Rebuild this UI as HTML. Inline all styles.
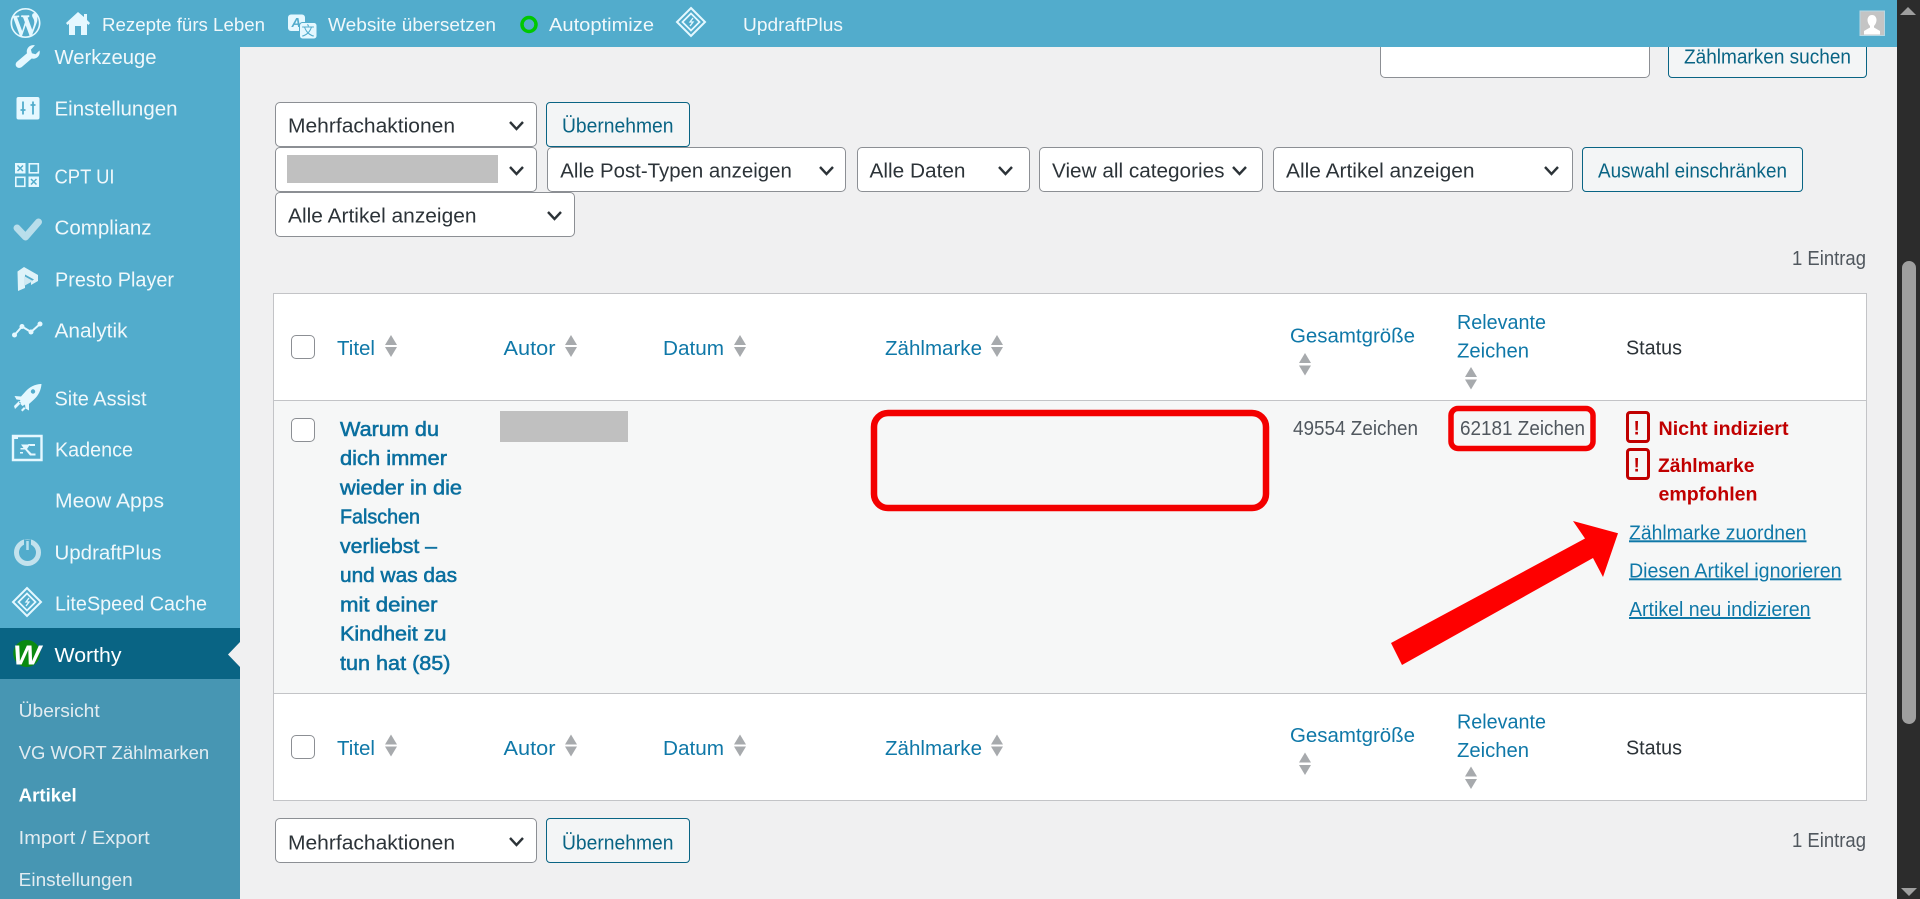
<!DOCTYPE html>
<html lang="de"><head><meta charset="utf-8"><title>Worthy – Artikel</title>
<style>
html,body{margin:0;padding:0;width:1920px;height:899px;overflow:hidden;background:#f0f0f1;font-family:"Liberation Sans",sans-serif}
.b{position:absolute;box-sizing:border-box}
.sel{background:#fff;border:1px solid #8c8f94;border-radius:5px}
.btn{background:#f3f5f6;border:1px solid #096484;border-radius:4px}
svg{position:absolute;left:0;top:0}
text{font-family:"Liberation Sans",sans-serif;font-size:20px}
.s{fill:#f0f8fb;font-size:20px}
.u{fill:#e2ecf1;font-size:18.6px}
.top{fill:#f0f8fb;font-size:18.8px}
.d{fill:#2c3338}
.g{fill:#50575e}
.bt{fill:#096484}
.l{fill:#0f78a8}
.tl{fill:#0a6f9f;stroke:#0a6f9f;stroke-width:.55px}
.r{fill:#c00000;font-weight:700;font-size:19.6px}
.a{fill:#0f78a8;text-decoration:underline}
.c{fill:none;stroke:#2c3338;stroke-width:2.4}
.ar{fill:#a7aaad}
.ic{fill:#e5f8ff}
</style></head>
<body>
<div class="b" style="left:0;top:0;width:240px;height:899px;background:#52accc"></div>
<div class="b" style="left:0;top:628px;width:240px;height:51px;background:#096484"></div>
<div class="b" style="left:0;top:679px;width:240px;height:220px;background:#4796b3"></div>

<div class="b sel" style="left:1380px;top:20px;width:270px;height:58px"></div>
<div class="b btn" style="left:1668px;top:20px;width:199px;height:58px"></div>

<div class="b sel" style="left:275px;top:102px;width:262px;height:45px"></div>
<div class="b btn" style="left:546px;top:102px;width:144px;height:45px"></div>
<div class="b sel" style="left:275px;top:147px;width:262px;height:45px"></div>
<div class="b" style="left:287px;top:155px;width:211px;height:28px;background:#c0c0c0"></div>
<div class="b sel" style="left:547px;top:147px;width:299px;height:45px"></div>
<div class="b sel" style="left:857px;top:147px;width:173px;height:45px"></div>
<div class="b sel" style="left:1039px;top:147px;width:224px;height:45px"></div>
<div class="b sel" style="left:1273px;top:147px;width:300px;height:45px"></div>
<div class="b btn" style="left:1582px;top:147px;width:221px;height:45px"></div>
<div class="b sel" style="left:275px;top:192px;width:300px;height:45px"></div>

<div class="b" style="left:273px;top:293px;width:1594px;height:508px;background:#fff;border:1px solid #c3c4c7"></div>
<div class="b" style="left:274px;top:400px;width:1592px;height:294px;background:#f6f7f7;border-top:1px solid #c3c4c7;border-bottom:1px solid #c3c4c7"></div>
<div class="b" style="left:291px;top:335px;width:24px;height:24px;background:#fff;border:1px solid #8c8f94;border-radius:5px"></div>
<div class="b" style="left:291px;top:418px;width:24px;height:24px;background:#fff;border:1px solid #8c8f94;border-radius:5px"></div>
<div class="b" style="left:291px;top:735px;width:24px;height:24px;background:#fff;border:1px solid #8c8f94;border-radius:5px"></div>
<div class="b" style="left:500px;top:411px;width:128px;height:31px;background:#c0c0c0"></div>

<div class="b sel" style="left:275px;top:818px;width:262px;height:45px"></div>
<div class="b btn" style="left:546px;top:818px;width:144px;height:45px"></div>

<div class="b" style="left:0;top:0;width:1897px;height:47px;background:#52accc"></div>
<div class="b" style="left:1897px;top:0;width:23px;height:899px;background:#2c2c2c"></div>
<div class="b" style="left:1902px;top:261px;width:14px;height:463px;background:#9f9f9f;border-radius:7px"></div>

<svg width="1920" height="899" viewBox="0 0 1920 899" xmlns="http://www.w3.org/2000/svg">
<!-- scrollbar arrows -->
<path d="M1908 7l8 8h-16z" fill="#9f9f9f"/><path d="M1901 888h16l-8 8z" fill="#9f9f9f"/>
<!-- sidebar pointer -->
<path d="M240 642v25l-12-12.500z" fill="#f0f0f1"/>

<!-- top bar -->
<g transform="translate(10.500 8) scale(1.500)" class="ic"><path fill-rule="evenodd" d="M20 10c0-5.510-4.490-10-10-10C4.480 0 0 4.490 0 10c0 5.520 4.480 10 10 10 5.510 0 10-4.480 10-10zM7.780 15.370L4.370 6.220c.55-.02 1.170-.08 1.170-.08.5-.06.44-1.130-.06-1.110 0 0-1.450.11-2.370.11-.18 0-.37 0-.58-.01C4.120 2.690 6.870 1.110 10 1.110c2.330 0 4.450.87 6.050 2.340-.68-.11-1.650.39-1.650 1.580 0 .74.45 1.360.9 2.100.35.61.55 1.360.55 2.460 0 1.490-1.400 5-1.400 5l-3.030-8.370c.54-.02.82-.17.82-.17.5-.05.44-1.250-.06-1.220 0 0-1.440.12-2.380.12-.87 0-2.330-.12-2.330-.12-.5-.03-.56 1.200-.06 1.220l.92.08 1.260 3.410zM17.410 10c.24-.64.74-1.870.43-4.250.7 1.290 1.050 2.710 1.050 4.250 0 3.290-1.730 6.240-4.400 7.780.97-2.590 1.940-5.200 2.920-7.780zM6.100 18.090C3.120 16.650 1.110 13.530 1.110 10c0-1.300.23-2.480.72-3.590C3.250 10.300 4.670 14.200 6.100 18.090zm4.030-6.630l2.580 6.980c-.86.29-1.760.45-2.710.45-.79 0-1.570-.11-2.290-.33.81-2.380 1.620-4.740 2.420-7.100z"/></g>
<path class="ic" fill-rule="evenodd" d="M78 12l6 5v-3h3v6l3 3-1.500 2-1.500-1.300V35H69V23.700L67.500 25 66 23zM75 26v9h6v-9z"/>
<text class="top" x="102" y="31" textLength="163" lengthAdjust="spacingAndGlyphs">Rezepte fürs Leben</text>
<rect x="288" y="14.500" width="17" height="16.500" rx="3" class="ic"/>
<text x="291.500" y="27" style="font-size:13px;font-style:italic;font-weight:700;fill:#52accc">A</text>
<rect x="299.500" y="22.500" width="17.500" height="16.500" rx="3" class="ic" stroke="#52accc" stroke-width="1"/>
<text x="301.500" y="35.500" style="font-size:13px;fill:#52accc;font-family:'Noto Sans CJK SC',sans-serif">文</text>
<text class="top" x="328" y="31" textLength="168" lengthAdjust="spacingAndGlyphs">Website übersetzen</text>
<circle cx="529" cy="24.500" r="7" fill="none" stroke="#00c800" stroke-width="3.500"/>
<text class="top" x="549" y="31" textLength="105" lengthAdjust="spacingAndGlyphs">Autoptimize</text>
<g fill="none" stroke="#e5f8ff">
<path d="M691 8l14 14-14 14-14-14z" stroke-width="2"/>
<path d="M691 13.500l8.500 8.500-8.500 8.500-8.500-8.500z" stroke-width="1.800"/>
<path d="M693 18l-3 4h3l-3 4" stroke-width="1.300"/>
</g>
<text class="top" x="743" y="31" textLength="100" lengthAdjust="spacingAndGlyphs">UpdraftPlus</text>
<rect x="1860" y="11" width="24.500" height="24.500" fill="#c4c4c4" stroke="#b8d8e4"/>
<path d="M1872 15c3 0 4.500 2.500 4.500 5s-1.500 5-2.500 6v1.500l6 3.500v3.500h-16V31l6-3.500V26c-1-1-2.500-3.500-2.500-6s1.500-5 4.500-5z" fill="#fff"/>

<!-- sidebar icons -->
<path class="ic" d="M39.500 50.500c.6 2.400 0 4.800-1.800 6.500-1.700 1.600-4 2-6 1.500L21.800 67c-1.600 1.300-4 1.200-5.300-.3-1.300-1.500-1-3.700.5-5l10-8.500c-.6-2.200 0-4.500 1.700-6.200 1.700-1.600 4-2.200 6.200-1.600l-4 4.200 1 3.700 3.700 1z"/>
<rect class="ic" x="16.500" y="97" width="23" height="22.500" rx="2"/>
<path d="M23 101.500v13M33 101.500v13M20.500 110h5M30.500 105h5" stroke="#52accc" stroke-width="1.800" fill="none"/>
<g class="ic"><rect x="15" y="163" width="10.500" height="10.500"/><rect x="28.500" y="176.500" width="10.500" height="10.500"/></g>
<g fill="none" stroke="#e5f8ff" stroke-width="1.600"><rect x="29.300" y="163.800" width="9" height="9"/><rect x="15.800" y="177.300" width="9" height="9"/></g>
<g stroke="#52accc" stroke-width="1.500"><path d="M17.500 165.500l5.500 5.500m0-5.500l-5.500 5.500M31 179l5.500 5.500m0-5.500l-5.500 5.500"/></g>
<path d="M17 228l8.500 9 13-15" fill="none" stroke="#b9deeb" stroke-width="7" stroke-linecap="round" stroke-linejoin="round"/>
<path d="M17.500 271.500L24 267l14 8v6l-7 4v-3.500l3-2-9-5v13.500l-7 3z" fill="#dff3f9"/>
<path d="M24 276l9 5-9 5z" fill="#cfe9f2"/>
<g fill="none" stroke="#e5f8ff" stroke-width="2"><path d="M14.500 335l7.500-8.500 9 5.500 9-8"/></g>
<g class="ic"><circle cx="14.500" cy="335" r="2.500"/><circle cx="22" cy="326.500" r="2.500"/><circle cx="31" cy="332" r="2.500"/><circle cx="40" cy="324" r="2.500"/></g>
<path class="ic" d="M40.500 384c-6 .5-11 3-15 7.500L21 396.500l-6.500-.5 2 3.500 4 .5-1.500 2.500 3.500 3.500 2.500-1.500.5 4 3.500 2 0-6.500 5-4.500c4.500-4 7-9.500 7.500-15.500zM14 406l5-5 2 2-6 6zM21 410l3-3 1.500 1.500-3 3z"/>
<circle cx="33" cy="391.500" r="2.200" fill="#52accc"/>
<g fill="none" stroke="#e5f8ff"><path d="M13 436h28.500v24H13z" stroke-width="2.400"/></g>
<path class="ic" d="M13 435h5v4h-5zM21 444.500h9l-3 4.500 4.500 4.500h4v2h-5.500l-5-6h-4.500v-1.500h3zM28 444h7v2h-5zM20 452h3v1.500h-3z"/>
<circle cx="27.500" cy="552.500" r="11" fill="none" stroke="#c3e2ed" stroke-width="5"/>
<path d="M27.500 539.500v11" stroke="#52accc" stroke-width="7"/>
<path d="M27.500 541v9" stroke="#e5f8ff" stroke-width="2.500" opacity=".7"/>
<g fill="none" stroke="#e5f8ff">
<path d="M27 588l14 14-14 14-14-14z" stroke-width="2"/>
<path d="M27 593.500l8.500 8.500-8.500 8.500-8.500-8.500z" stroke-width="1.800"/>
<path d="M29 598l-3 4h3l-3 4" stroke-width="1.300"/>
</g>
<circle cx="26.700" cy="653.500" r="13.500" fill="#0a8a10"/>
<text x="13" y="664.500" style="font-size:28px;font-weight:700;font-style:italic;fill:#fff" textLength="28" lengthAdjust="spacingAndGlyphs">W</text>

<!-- sidebar text -->
<text class="s" x="54.500" y="64" textLength="102" lengthAdjust="spacingAndGlyphs">Werkzeuge</text>
<text class="s" x="54.500" y="115.500" textLength="123" lengthAdjust="spacingAndGlyphs">Einstellungen</text>
<text class="s" x="54.500" y="183.700" textLength="60" lengthAdjust="spacingAndGlyphs">CPT UI</text>
<text class="s" x="54.500" y="234.300" textLength="97" lengthAdjust="spacingAndGlyphs">Complianz</text>
<text class="s" x="55" y="286.700" textLength="119" lengthAdjust="spacingAndGlyphs">Presto Player</text>
<text class="s" x="54.500" y="337.700" textLength="73" lengthAdjust="spacingAndGlyphs">Analytik</text>
<text class="s" x="54.500" y="405.700" textLength="92" lengthAdjust="spacingAndGlyphs">Site Assist</text>
<text class="s" x="55" y="456.700" textLength="78" lengthAdjust="spacingAndGlyphs">Kadence</text>
<text class="s" x="55" y="507.700" textLength="109" lengthAdjust="spacingAndGlyphs">Meow Apps</text>
<text class="s" x="54.500" y="559.300" textLength="107" lengthAdjust="spacingAndGlyphs">UpdraftPlus</text>
<text class="s" x="55" y="610.700" textLength="152" lengthAdjust="spacingAndGlyphs">LiteSpeed Cache</text>
<text class="s" x="54.500" y="662" textLength="67" lengthAdjust="spacingAndGlyphs" style="fill:#fff">Worthy</text>
<text class="u" x="18.700" y="717" textLength="81" lengthAdjust="spacingAndGlyphs">Übersicht</text>
<text class="u" x="18.700" y="759" textLength="190.500" lengthAdjust="spacingAndGlyphs">VG WORT Zählmarken</text>
<text class="u" x="18.700" y="801.700" textLength="58" lengthAdjust="spacingAndGlyphs" style="fill:#fff;font-weight:700">Artikel</text>
<text class="u" x="18.700" y="844" textLength="131" lengthAdjust="spacingAndGlyphs">Import / Export</text>
<text class="u" x="18.700" y="886" textLength="114" lengthAdjust="spacingAndGlyphs">Einstellungen</text>

<!-- filter bar -->
<text class="bt" x="1684" y="63.300" textLength="167" lengthAdjust="spacingAndGlyphs">Zählmarken suchen</text>
<text class="d" x="288" y="132.700" textLength="167" lengthAdjust="spacingAndGlyphs">Mehrfachaktionen</text>
<text class="bt" x="562" y="132.300" textLength="111.500" lengthAdjust="spacingAndGlyphs">Übernehmen</text>
<text class="d" x="560.300" y="177.700" textLength="231.500" lengthAdjust="spacingAndGlyphs">Alle Post-Typen anzeigen</text>
<text class="d" x="869.500" y="177.700" textLength="96" lengthAdjust="spacingAndGlyphs">Alle Daten</text>
<text class="d" x="1052" y="177.700" textLength="172.500" lengthAdjust="spacingAndGlyphs">View all categories</text>
<text class="d" x="1286" y="177.700" textLength="188.500" lengthAdjust="spacingAndGlyphs">Alle Artikel anzeigen</text>
<text class="bt" x="1598" y="177.300" textLength="189" lengthAdjust="spacingAndGlyphs">Auswahl einschränken</text>
<text class="d" x="288" y="222.700" textLength="188.500" lengthAdjust="spacingAndGlyphs">Alle Artikel anzeigen</text>
<text class="g" x="1792" y="265" textLength="74" lengthAdjust="spacingAndGlyphs">1 Eintrag</text>
<g class="c">
<path d="M510 122l6.500 7 6.500-7"/><path d="M510 167l6.500 7 6.500-7"/><path d="M820 167l6.500 7 6.500-7"/>
<path d="M999 167l6.500 7 6.500-7"/><path d="M1233 167l6.500 7 6.500-7"/><path d="M1545 167l6.500 7 6.500-7"/>
<path d="M548 212l6.500 7 6.500-7"/><path d="M510 838l6.500 7 6.500-7"/>
</g>

<!-- table head -->
<text class="l" x="337" y="355" textLength="38" lengthAdjust="spacingAndGlyphs">Titel</text>
<path class="ar" d="M391 335l6 10h-12zM385 347h12l-6 10z"/>
<text class="l" x="503.500" y="355" textLength="52" lengthAdjust="spacingAndGlyphs">Autor</text>
<path class="ar" d="M571 335l6 10h-12zM565 347h12l-6 10z"/>
<text class="l" x="663" y="355" textLength="61" lengthAdjust="spacingAndGlyphs">Datum</text>
<path class="ar" d="M740 335l6 10h-12zM734 347h12l-6 10z"/>
<text class="l" x="885" y="355" textLength="97" lengthAdjust="spacingAndGlyphs">Zählmarke</text>
<path class="ar" d="M997 335l6 10h-12zM991 347h12l-6 10z"/>
<text class="l" x="1290" y="342.700" textLength="125" lengthAdjust="spacingAndGlyphs">Gesamtgröße</text>
<path class="ar" d="M1305 353l6 10h-12zM1299 365.500h12l-6 10z"/>
<text class="l" x="1457" y="329" textLength="89" lengthAdjust="spacingAndGlyphs">Relevante</text>
<text class="l" x="1457" y="357.700" textLength="72" lengthAdjust="spacingAndGlyphs">Zeichen</text>
<path class="ar" d="M1471 367l6 10h-12zM1465 379.500h12l-6 10z"/>
<text class="d" x="1626" y="354.500" textLength="56" lengthAdjust="spacingAndGlyphs">Status</text>

<!-- row -->
<text class="tl" x="340" y="436" textLength="99" lengthAdjust="spacingAndGlyphs">Warum du</text>
<text class="tl" x="340" y="465.200" textLength="107" lengthAdjust="spacingAndGlyphs">dich immer</text>
<text class="tl" x="340" y="494.500" textLength="122" lengthAdjust="spacingAndGlyphs">wieder in die</text>
<text class="tl" x="340" y="523.700" textLength="80" lengthAdjust="spacingAndGlyphs">Falschen</text>
<text class="tl" x="340" y="553" textLength="97" lengthAdjust="spacingAndGlyphs">verliebst –</text>
<text class="tl" x="340" y="582.200" textLength="117" lengthAdjust="spacingAndGlyphs">und was das</text>
<text class="tl" x="340" y="611.500" textLength="97.500" lengthAdjust="spacingAndGlyphs">mit deiner</text>
<text class="tl" x="340" y="640.700" textLength="106.500" lengthAdjust="spacingAndGlyphs">Kindheit zu</text>
<text class="tl" x="340" y="670" textLength="110.500" lengthAdjust="spacingAndGlyphs">tun hat (85)</text>
<text class="g" x="1293" y="435" textLength="125" lengthAdjust="spacingAndGlyphs">49554 Zeichen</text>
<text class="g" x="1460" y="435" textLength="125" lengthAdjust="spacingAndGlyphs">62181 Zeichen</text>
<rect x="874" y="413" width="392" height="95" rx="14" fill="none" stroke="#f30000" stroke-width="6.500"/>
<rect x="1451" y="408.500" width="142" height="40" rx="7" fill="none" stroke="#f30000" stroke-width="5.500"/>
<rect x="1627.500" y="412.500" width="21" height="29" rx="2.500" fill="none" stroke="#c00000" stroke-width="3"/>
<rect x="1627.500" y="449.500" width="21" height="29" rx="2.500" fill="none" stroke="#c00000" stroke-width="3"/>
<text class="r" x="1633.500" y="434.500" style="font-size:19px">!</text>
<text class="r" x="1633.500" y="471.500" style="font-size:19px">!</text>
<text class="r" x="1658.500" y="435" textLength="130" lengthAdjust="spacingAndGlyphs">Nicht indiziert</text>
<text class="r" x="1658" y="472" textLength="96.500" lengthAdjust="spacingAndGlyphs">Zählmarke</text>
<text class="r" x="1658.500" y="500.500" textLength="99" lengthAdjust="spacingAndGlyphs">empfohlen</text>
<text class="a" x="1629" y="539.300" textLength="177.500" lengthAdjust="spacingAndGlyphs">Zählmarke zuordnen</text>
<text class="a" x="1629" y="577.300" textLength="212.500" lengthAdjust="spacingAndGlyphs">Diesen Artikel ignorieren</text>
<text class="a" x="1629" y="616" textLength="181.500" lengthAdjust="spacingAndGlyphs">Artikel neu indizieren</text>
<path d="M1618 533.300L1573 521l12 17.500L1391 643l11 22L1593 558l10 19z" fill="#fe0000"/>

<!-- table foot -->
<text class="l" x="337" y="754.800" textLength="38" lengthAdjust="spacingAndGlyphs">Titel</text>
<path class="ar" d="M391 734.500l6 10h-12zM385 746.500h12l-6 10z"/>
<text class="l" x="503.500" y="754.800" textLength="52" lengthAdjust="spacingAndGlyphs">Autor</text>
<path class="ar" d="M571 734.500l6 10h-12zM565 746.500h12l-6 10z"/>
<text class="l" x="663" y="754.800" textLength="61" lengthAdjust="spacingAndGlyphs">Datum</text>
<path class="ar" d="M740 734.500l6 10h-12zM734 746.500h12l-6 10z"/>
<text class="l" x="885" y="754.800" textLength="97" lengthAdjust="spacingAndGlyphs">Zählmarke</text>
<path class="ar" d="M997 734.500l6 10h-12zM991 746.500h12l-6 10z"/>
<text class="l" x="1290" y="742.200" textLength="125" lengthAdjust="spacingAndGlyphs">Gesamtgröße</text>
<path class="ar" d="M1305 752.500l6 10h-12zM1299 765h12l-6 10z"/>
<text class="l" x="1457" y="728.500" textLength="89" lengthAdjust="spacingAndGlyphs">Relevante</text>
<text class="l" x="1457" y="757.200" textLength="72" lengthAdjust="spacingAndGlyphs">Zeichen</text>
<path class="ar" d="M1471 766.500l6 10h-12zM1465 779h12l-6 10z"/>
<text class="d" x="1626" y="754.300" textLength="56" lengthAdjust="spacingAndGlyphs">Status</text>

<!-- bottom bar -->
<text class="d" x="288" y="849.500" textLength="167" lengthAdjust="spacingAndGlyphs">Mehrfachaktionen</text>
<text class="bt" x="562" y="849.500" textLength="111.500" lengthAdjust="spacingAndGlyphs">Übernehmen</text>
<text class="g" x="1792" y="847" textLength="74" lengthAdjust="spacingAndGlyphs">1 Eintrag</text>
</svg>
</body></html>
